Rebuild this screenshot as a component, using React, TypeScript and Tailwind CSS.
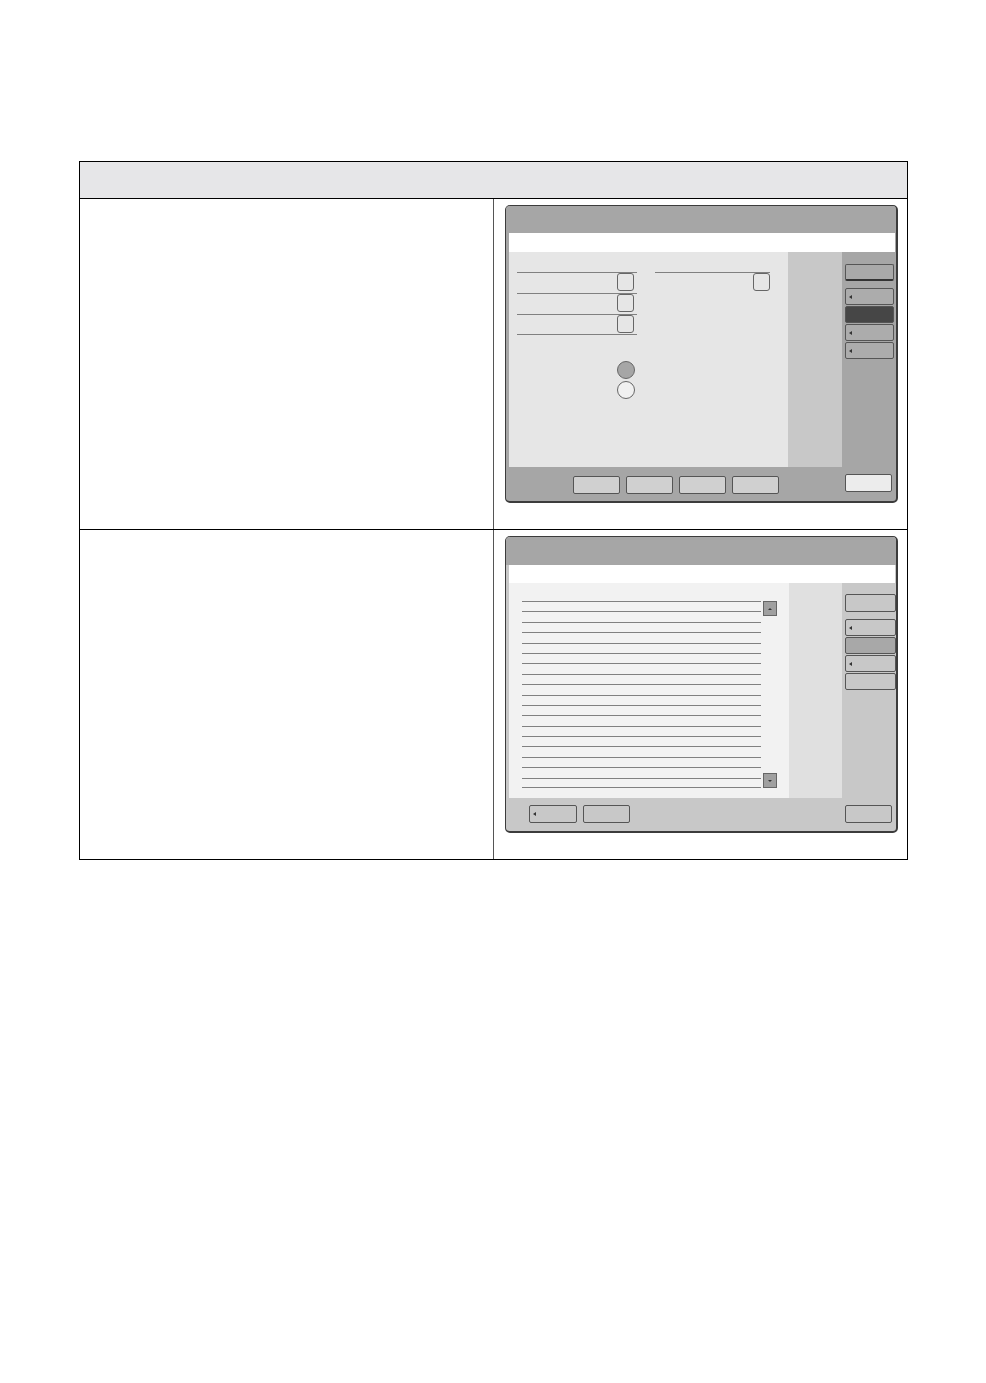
type ButtonProps = {
  tone: string;
  arrow?: boolean;
  className?: string;
};

function PanelButton({ tone, arrow = false, className = "" }: ButtonProps) {
  return (
    <div
      className={`flex items-center rounded-[2px] border border-[#555] pl-[3px] ${tone} ${className}`}
    >
      {arrow && (
        <span className="h-0 w-0 border-y-[2px] border-r-[3px] border-y-transparent border-r-[#333]" />
      )}
    </div>
  );
}

function Checkbox() {
  return <div className="h-[18px] w-[17px] rounded-[3px] border border-[#666] bg-[#e6e6e6]" />;
}

function SettingsScreen() {
  return (
    <div className="flex h-[298px] w-[393px] flex-col overflow-hidden rounded-[5px] border border-r-2 border-b-2 border-[#3c3c3c] bg-[#a6a6a6]">
      <div className="h-[27px] shrink-0 bg-[#a6a6a6]" />
      <div className="ml-[3px] mr-[1px] h-[19px] shrink-0 bg-white" />
      <div className="flex h-[215px] shrink-0">
        <div className="ml-[3px] flex w-[279px] gap-[18px] bg-[#e6e6e6] pl-[8px] pt-[20px]">
          <div className="flex w-[120px] flex-col">
            {[0, 1, 2].map((i) => (
              <div
                key={i}
                className={`flex h-[21px] justify-end border-t border-[#808080] pr-[3px] ${i === 2 ? "border-b" : ""}`}
              >
                <Checkbox />
              </div>
            ))}
            <div className="ml-[100px] mt-[26px] flex flex-col gap-[2px]">
              <div className="h-[18px] w-[18px] rounded-full border border-[#666] bg-[#a6a6a6]" />
              <div className="h-[18px] w-[18px] rounded-full border border-[#666] bg-[#f0f0f0]" />
            </div>
          </div>
          <div className="flex h-[21px] w-[115px] justify-end border-t border-[#808080]">
            <Checkbox />
          </div>
        </div>
        <div className="w-[54px] bg-[#c8c8c8]" />
        <div className="flex flex-col pl-[3px] pt-[12px]">
          <PanelButton tone="bg-[#a9a9a9]" className="h-[17px] w-[49px] border-b-2 border-b-[#333]" />
          <div className="mt-[7px] flex flex-col gap-[1px]">
            <PanelButton tone="bg-[#acacac]" arrow className="h-[17px] w-[49px]" />
            <PanelButton tone="bg-[#464646]" className="h-[17px] w-[49px]" />
            <PanelButton tone="bg-[#acacac]" arrow className="h-[17px] w-[49px]" />
            <PanelButton tone="bg-[#acacac]" arrow className="h-[17px] w-[49px]" />
          </div>
        </div>
      </div>
      <div className="flex flex-1 items-start">
        <div className="ml-[67px] mt-[9px] flex gap-[6px]">
          {[0, 1, 2, 3].map((i) => (
            <PanelButton key={i} tone="bg-[#d0d0d0]" className="h-[18px] w-[47px]" />
          ))}
        </div>
        <PanelButton tone="bg-[#ececec]" className="ml-auto mr-[4px] mt-[7px] h-[18px] w-[47px]" />
      </div>
    </div>
  );
}

function ListScreen() {
  const lines = Array.from({ length: 18 });
  return (
    <div className="flex h-[297px] w-[393px] flex-col overflow-hidden rounded-[5px] border border-r-2 border-b-2 border-[#3c3c3c] bg-[#c8c8c8]">
      <div className="h-[28px] shrink-0 bg-[#a6a6a6]" />
      <div className="ml-[3px] mr-[1px] h-[18px] shrink-0 bg-white" />
      <div className="flex h-[215px] shrink-0">
        <div className="ml-[3px] flex w-[280px] bg-[#f2f2f2] pl-[13px] pt-[18px]">
          <div className="flex w-[239px] flex-col">
            {lines.map((_, i) => (
              <div
                key={i}
                className={`h-[10.4px] border-t border-[#808080] ${i === lines.length - 1 ? "border-b" : ""}`}
              />
            ))}
          </div>
          <div className="ml-[2px] flex h-[187px] flex-col justify-between">
            <div className="flex h-[15px] w-[14px] items-center justify-center border border-[#666] bg-[#a0a0a0]">
              <span className="h-0 w-0 border-x-[2px] border-b-[2px] border-x-transparent border-b-[#333]" />
            </div>
            <div className="flex h-[15px] w-[14px] items-center justify-center border border-[#666] bg-[#a0a0a0]">
              <span className="h-0 w-0 border-x-[2px] border-t-[2px] border-x-transparent border-t-[#333]" />
            </div>
          </div>
        </div>
        <div className="w-[53px] bg-[#e0e0e0]" />
        <div className="flex flex-col pl-[3px] pt-[11px]">
          <PanelButton tone="bg-[#c8c8c8]" className="h-[18px] w-[51px]" />
          <div className="mt-[7px] flex flex-col gap-[1px]">
            <PanelButton tone="bg-[#c8c8c8]" arrow className="h-[17px] w-[51px]" />
            <PanelButton tone="bg-[#a8a8a8]" className="h-[17px] w-[51px]" />
            <PanelButton tone="bg-[#c8c8c8]" arrow className="h-[17px] w-[51px]" />
            <PanelButton tone="bg-[#c8c8c8]" className="h-[17px] w-[51px]" />
          </div>
        </div>
      </div>
      <div className="flex flex-1 items-start">
        <div className="ml-[23px] mt-[7px] flex gap-[6px]">
          <PanelButton tone="bg-[#c8c8c8]" arrow className="h-[18px] w-[48px]" />
          <PanelButton tone="bg-[#c8c8c8]" className="h-[18px] w-[47px]" />
        </div>
        <PanelButton tone="bg-[#c8c8c8]" className="ml-auto mr-[4px] mt-[7px] h-[18px] w-[47px]" />
      </div>
    </div>
  );
}

export default function App() {
  return (
    <div className="min-h-[1383px] w-[986px] bg-white pt-[161px] font-['Liberation_Sans',sans-serif]">
      <div className="ml-[79px] w-[829px] border border-black">
        <div className="h-[37px] border-b border-black bg-[#e6e6e8]" />
        <div className="flex h-[331px] border-b border-black">
          <div className="w-[414px] border-r border-[#555]" />
          <div className="pl-[11px] pt-[6px]">
            <SettingsScreen />
          </div>
        </div>
        <div className="flex h-[329px]">
          <div className="w-[414px] border-r border-[#555]" />
          <div className="pl-[11px] pt-[6px]">
            <ListScreen />
          </div>
        </div>
      </div>
    </div>
  );
}
